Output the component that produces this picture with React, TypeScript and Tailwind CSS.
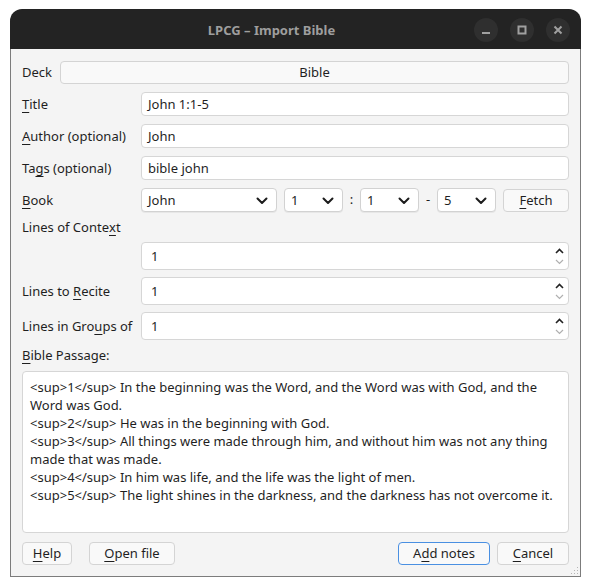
import React from "react";

const font = { fontFamily: '"Noto Sans", "Open Sans", sans-serif' };

function U({ children }: { children: React.ReactNode }) {
  return <span className="underline decoration-1 underline-offset-[3px]">{children}</span>;
}

function Chevron() {
  return (
    <svg width="12" height="8" viewBox="0 0 12 8" className="shrink-0">
      <polyline points="1.5,1.5 6,6 10.5,1.5" fill="none" stroke="#1c1c1c" strokeWidth="2" strokeLinecap="round" strokeLinejoin="round" />
    </svg>
  );
}

function Combo({ value, w }: { value: string; w: string }) {
  return (
    <div className={`${w} h-[24px] flex items-center justify-between pl-[6px] pr-[8px] pt-[1px] bg-white border border-[#d2d2d2] rounded-[4px] shadow-[0_1px_0_rgba(0,0,0,0.05)]`}>
      <span>{value}</span>
      <Chevron />
    </div>
  );
}

function Input({ value }: { value: string }) {
  return (
    <div className="flex-1 h-[24px] flex items-center pl-[6px] pt-[1px] bg-white border border-[#d6d6d6] rounded-[4px]">
      {value}
    </div>
  );
}

function Spin({ value }: { value: string }) {
  return (
    <div className="flex-1 h-[28px] flex items-center justify-between pl-[9px] pr-[4px] bg-white border border-[#d6d6d6] rounded-[4px]">
      <span className="pt-[1px]">{value}</span>
      <div className="flex flex-col items-center gap-[5px]">
        <svg width="9" height="6" viewBox="0 0 9 6">
          <polyline points="1,5 4.5,1.5 8,5" fill="none" stroke="#222" strokeWidth="1.6" />
        </svg>
        <svg width="9" height="6" viewBox="0 0 9 6">
          <polyline points="1,1 4.5,4.5 8,1" fill="none" stroke="#b0b0b0" strokeWidth="1.2" />
        </svg>
      </div>
    </div>
  );
}

function Btn({ children, w, def }: { children: React.ReactNode; w: string; def?: boolean }) {
  return (
    <div
      className={`${w} h-[23px] flex items-center justify-center pt-[1px] rounded-[4px] bg-[#f9f9f9] border ${
        def ? "border-[#4a90e2]" : "border-[#d4d4d4]"
      }`}
    >
      {children}
    </div>
  );
}

export default function App() {
  return (
    <div className="w-[591px] h-[588px] bg-white overflow-hidden" style={font}>
      <div className="ml-[10px] mt-[9px] w-[571px] h-[568px] flex flex-col text-[13px] text-[#1f1f1f]">
        {/* Title bar */}
        <div className="h-[40px] shrink-0 bg-[#232323] rounded-t-[12px] flex items-center relative">
          <div className="flex-1 flex justify-center pr-[48px] pt-[3px] font-bold text-[#9e9e9e] text-[13px]">
            LPCG – Import Bible
          </div>
          <div className="absolute right-[11px] top-[9px] flex gap-[12px]">
            <div className="w-[24px] h-[24px] rounded-full bg-[#2f2f2f] flex items-center justify-center">
              <svg width="10" height="10" viewBox="0 0 10 10">
                <rect x="1" y="7" width="8" height="2" fill="#a0a0a0" />
              </svg>
            </div>
            <div className="w-[24px] h-[24px] rounded-full bg-[#2f2f2f] flex items-center justify-center">
              <svg width="10" height="10" viewBox="0 0 10 10">
                <rect x="1.5" y="1.5" width="7" height="7" fill="none" stroke="#a0a0a0" strokeWidth="2" />
              </svg>
            </div>
            <div className="w-[24px] h-[24px] rounded-full bg-[#2f2f2f] flex items-center justify-center">
              <svg width="10" height="10" viewBox="0 0 10 10">
                <path d="M1.5 1.5 L8.5 8.5 M8.5 1.5 L1.5 8.5" stroke="#a0a0a0" strokeWidth="2" />
              </svg>
            </div>
          </div>
        </div>

        {/* Body */}
        <div className="flex-1 bg-[#f4f4f4] border border-t-0 border-[#7c7c7c] pl-[11px] pr-[11px] pt-[12px] flex flex-col relative">
          <div className="h-[23px] flex items-center gap-[8px]">
            <span className="pt-[1px]">Deck</span>
            <div className="flex-1 h-[23px] flex items-center justify-center pt-[1px] bg-[#f9f9f9] border border-[#d4d4d4] rounded-[4px]">
              Bible
            </div>
          </div>

          <div className="mt-[8px] h-[24px] flex items-center">
            <span className="w-[119px] shrink-0 pt-[1px]"><U>T</U>itle</span>
            <Input value="John 1:1-5" />
          </div>
          <div className="mt-[8px] h-[24px] flex items-center">
            <span className="w-[119px] shrink-0 pt-[1px]"><U>A</U>uthor (optional)</span>
            <Input value="John" />
          </div>
          <div className="mt-[8px] h-[24px] flex items-center">
            <span className="w-[119px] shrink-0 pt-[1px]">Ta<U>g</U>s (optional)</span>
            <Input value="bible john" />
          </div>
          <div className="mt-[8px] h-[24px] flex items-center">
            <span className="w-[119px] shrink-0 pt-[1px]"><U>B</U>ook</span>
            <Combo value="John" w="w-[136px]" />
            <div className="w-[7px]" />
            <Combo value="1" w="w-[59px]" />
            <span className="w-[17px] text-center">:</span>
            <Combo value="1" w="w-[59px]" />
            <span className="w-[18px] text-center">-</span>
            <Combo value="5" w="w-[59px]" />
            <div className="w-[7px]" />
            <Btn w="flex-1">
              <span><U>F</U>etch</span>
            </Btn>
          </div>

          <div className="mt-[7px] h-[17px] flex items-center pt-[1px]">
            Lines of Conte<U>x</U>t
          </div>
          <div className="mt-[6px] h-[28px] flex items-center">
            <span className="w-[119px] shrink-0" />
            <Spin value="1" />
          </div>
          <div className="mt-[7px] h-[28px] flex items-center">
            <span className="w-[119px] shrink-0 pt-[1px]">Lines to <U>R</U>ecite</span>
            <Spin value="1" />
          </div>
          <div className="mt-[7px] h-[28px] flex items-center">
            <span className="w-[119px] shrink-0 pt-[1px]">Lines in Gro<U>u</U>ps of</span>
            <Spin value="1" />
          </div>

          <div className="mt-[7px] h-[17px] flex items-center pt-[1px]">
            <span><U>B</U>ible Passage:</span>
          </div>
          <div className="mt-[7px] h-[162px] bg-white border border-[#d6d6d6] rounded-[4px] px-[7px] pt-[6px] leading-[18px]">
            <div>{"<sup>1</sup> In the beginning was the Word, and the Word was with God, and the"}</div>
            <div>Word was God.</div>
            <div>{"<sup>2</sup> He was in the beginning with God."}</div>
            <div>{"<sup>3</sup> All things were made through him, and without him was not any thing"}</div>
            <div>made that was made.</div>
            <div>{"<sup>4</sup> In him was life, and the life was the light of men."}</div>
            <div>{"<sup>5</sup> The light shines in the darkness, and the darkness has not overcome it."}</div>
          </div>

          <div className="mt-[9px] h-[23px] flex items-center">
            <Btn w="w-[50px]">
              <span><U>H</U>elp</span>
            </Btn>
            <div className="w-[17px]" />
            <Btn w="w-[86px]">
              <span><U>O</U>pen file</span>
            </Btn>
            <div className="flex-1" />
            <Btn w="w-[92px]" def>
              <span>A<U>d</U>d notes</span>
            </Btn>
            <div className="w-[7px]" />
            <Btn w="w-[72px]">
              <span><U>C</U>ancel</span>
            </Btn>
          </div>

          <svg className="absolute right-[1px] bottom-[1px]" width="10" height="10" viewBox="0 0 10 10">
            <rect x="8" y="2" width="1" height="1" fill="#b5b5b5" />
            <rect x="5" y="5" width="1" height="1" fill="#b5b5b5" />
            <rect x="8" y="5" width="1" height="1" fill="#b5b5b5" />
            <rect x="2" y="8" width="1" height="1" fill="#b5b5b5" />
            <rect x="5" y="8" width="1" height="1" fill="#b5b5b5" />
            <rect x="8" y="8" width="1" height="1" fill="#b5b5b5" />
          </svg>
        </div>
      </div>
    </div>
  );
}
